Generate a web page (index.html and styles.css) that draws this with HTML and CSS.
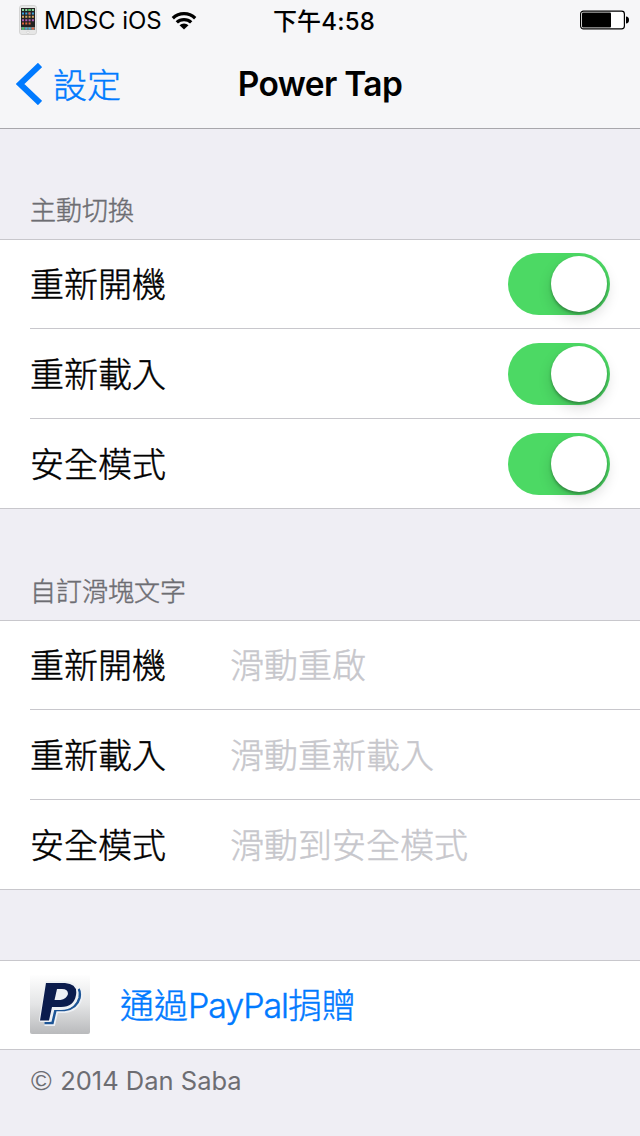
FILE: index.html
```html
<!DOCTYPE html>
<html lang="zh-Hant">
<head>
<meta charset="utf-8">
<title>Power Tap</title>
<link rel="stylesheet" href="styles.css">
</head>
<body>
<header class="top">
  <div class="status">
    <div class="carrier">
      <svg class="phone" width="18" height="30" viewBox="0 0 18 30">
        <rect x=".5" y=".5" width="17" height="29" rx="2.500" fill="#e6e6e6" stroke="#d4d4d4"/>
        <rect x="2" y="3" width="14" height="22" fill="#222"/>
        <rect x="2" y="22" width="14" height="3" fill="#777"/>
        <g stroke-width="2" stroke-dasharray="2 1.300">
          <path d="M3 5h12" stroke="#8bd8a0"/><path d="M3 8.400h12" stroke="#3fa4df"/>
          <path d="M3 11.800h12" stroke="#d6a860"/><path d="M3 15.200h12" stroke="#b460b8"/>
          <path d="M3 18.600h9" stroke="#e0663e"/><path d="M3 23.500h12" stroke="#3fb4d8"/>
        </g>
        <path d="M3 23.500h2M9.500 5h2" stroke="#4bc75b" stroke-width="2"/>
        <path d="M12.800 23.500h2.200M9.500 8.400h2" stroke="#e9633c" stroke-width="2"/>
        <circle cx="9" cy="27.300" r="1.200" fill="#fff" stroke="#bbb" stroke-width=".5"/>
      </svg>
      <span class="carrier-name">MDSC iOS</span>
      <svg class="wifi" width="26" height="19" viewBox="0 0 26 19">
        <g fill="none" stroke="#000" stroke-width="3.300">
          <path d="M1.800 7.200a16.200 16.200 0 0 1 22.400 0"/>
          <path d="M5.800 11.400a10.500 10.500 0 0 1 14.400 0"/>
        </g>
        <path d="M8.500 14.200a6.700 6.700 0 0 1 9 0L13 18.500z"/>
      </svg>
    </div>
    <div class="time">下午4:58</div>
    <svg class="battery" width="49" height="20" viewBox="0 0 49 20">
      <rect x=".6" y="1.100" width="43.800" height="17.800" rx="2.800" fill="#fff" stroke="#000" stroke-width="1.200"/>
      <rect x="2" y="2.500" width="29" height="15" rx="1"/>
      <path d="M46 6.500c2 0 3 1.500 3 3.500s-1 3.500-3 3.500z"/>
    </svg>
  </div>
  <nav class="nav">
    <div class="back">
      <svg class="chevron" width="26" height="42" viewBox="0 0 26 42"><path d="M24 2L4 21l20 19" fill="none" stroke="#007aff" stroke-width="6"/></svg>
      <span class="cjk">設定</span>
    </div>
    <h1 class="title">Power Tap</h1>
    <div></div>
  </nav>
</header>
<main>
  <h2 class="heading first cjk">主動切換</h2>
  <section class="group">
    <div class="row"><span class="label cjk">重新開機</span><span class="switch"><span class="knob"></span></span></div>
    <div class="row"><span class="label cjk">重新載入</span><span class="switch"><span class="knob"></span></span></div>
    <div class="row"><span class="label cjk">安全模式</span><span class="switch"><span class="knob"></span></span></div>
  </section>
  <h2 class="heading second cjk">自訂滑塊文字</h2>
  <section class="group">
    <div class="row"><span class="label cjk">重新開機</span><span class="hint cjk">滑動重啟</span></div>
    <div class="row"><span class="label cjk">重新載入</span><span class="hint cjk">滑動重新載入</span></div>
    <div class="row"><span class="label cjk">安全模式</span><span class="hint cjk">滑動到安全模式</span></div>
  </section>
  <section class="group donate">
    <div class="row">
      <svg class="paypal" width="60" height="60" viewBox="0 0 60 60">
        <defs><linearGradient id="tile" x2="0" y2="1"><stop offset="0" stop-color="#fff"/><stop offset=".5" stop-color="#e4e5e6"/><stop offset="1" stop-color="#b9babc"/></linearGradient></defs>
        <rect y="-1" width="60" height="60" rx="2" fill="url(#tile)"/>
        <path d="M48.500 14q2 3 1 9q-3 11-15 12h-9l-3 13h-8" fill="none" stroke="#eef1f5" stroke-width="6"/>
        <path d="M48.500 14q2 3 1 9q-3 11-15 12h-9l-3 13h-8" fill="none" stroke="#1d5596" stroke-width="2.500"/>
        <path d="M17 8h19q12 1 10 12q-2 13-15 13h-9l-3 12H11z" fill="#0b1c4d" stroke="#eef1f5" stroke-width="4" stroke-linejoin="round"/>
        <path fill-rule="evenodd" d="M16 8h19q13 1 11 12q-2 12-15 12h-9l-3 13.500H10zM27 14l-2.500 11h6q6-1 7.500-6q0-5-6-5z" fill="#0b1c4d"/>
        <path d="M27 14l-2.500 11h6q6-1 7.500-6q0-5-6-5z" fill="#eef1f5"/>
      </svg>
      <span class="link cjk">通過<span class="latin">PayPal</span>捐贈</span>
    </div>
  </section>
  <footer class="footer"><span class="copyright">©</span> 2014 Dan Saba</footer>
</main>
</body>
</html>
```

FILE: styles.css
```css
* { box-sizing: border-box; }
body {
  margin: 0;
  width: 640px;
  height: 1136px;
  overflow: hidden;
  background: #efeef4;
  color: #000;
  font-family: Inter, "Noto Sans CJK TC", sans-serif;
  font-size: 34px;
  line-height: 50px;
  white-space: nowrap;
}
h1, h2 { margin: 0; }
.cjk { font-weight: 300; -webkit-text-stroke: .45px currentColor; }
.top { height: 129px; background: #f6f6f8; border-bottom: 1px solid #a8a7ac; }
.status {
  display: grid;
  grid-template-columns: 1fr auto 1fr;
  align-items: center;
  height: 40px;
  padding: 0 11px 0 19px;
  font-size: 24px;
}
.carrier { display: flex; align-items: center; }
.carrier-name { margin-left: 7px; padding-top: 2px; line-height: 38px; letter-spacing: -.1px; }
.wifi { margin-left: 10px; }
.time { padding-top: 3px; font-weight: 500; letter-spacing: .2px; line-height: 37px; }
.battery { justify-self: end; }
.nav {
  display: grid;
  grid-template-columns: 1fr auto 1fr;
  align-items: center;
  height: 88px;
  padding: 0 17px;
}
.back { display: flex; align-items: center; gap: 11px; margin-left: -1px; color: #007aff; }
.back .cjk { padding-top: 3px; }
.title { font-size: 33.5px; font-weight: 600; letter-spacing: -.65px; }
.heading { padding: 0 30px; color: #6d6d72; font-size: 26px; line-height: 40px; }
.first { padding-top: 62px; height: 110px; }
.second { padding-top: 63px; height: 111px; }
.group { background: #fff; border: solid #c8c7cc; border-width: 1px 0; }
.row { display: flex; align-items: center; height: 90px; margin-left: 30px; padding-right: 30px; border-bottom: 1px solid #c8c7cc; }
.row:first-child { height: 89px; }
.row:last-child { height: 89px; border-bottom: 0; }
.row:only-child { height: 88px; }
.label { width: 200px; padding-top: 2px; }
.row:first-child .label, .row:first-child .hint { padding-top: 1px; }
.hint { padding-top: 2px; color: #c7c7cc; }
.switch { display: flex; justify-content: flex-end; width: 102px; height: 62px; margin-left: auto; padding: 3px; border-radius: 31px; background: #4cd964; }
.knob { width: 56px; height: 56px; border-radius: 50%; background: #fff; box-shadow: 0 6px 14px rgba(0,0,0,.15), 0 2px 3px rgba(0,0,0,.3); }
.donate { margin-top: 70px; }
.link { margin-left: 30px; padding-top: 1px; color: #007aff; }
.latin { letter-spacing: -1.1px; }
.footer { padding: 11px 31px; color: #6d6d72; font-size: 25.5px; line-height: 40px; }
.copyright { display: inline-block; width: 22px; font-family: "Liberation Sans", sans-serif; font-size: 28px; line-height: 30px; }
```
